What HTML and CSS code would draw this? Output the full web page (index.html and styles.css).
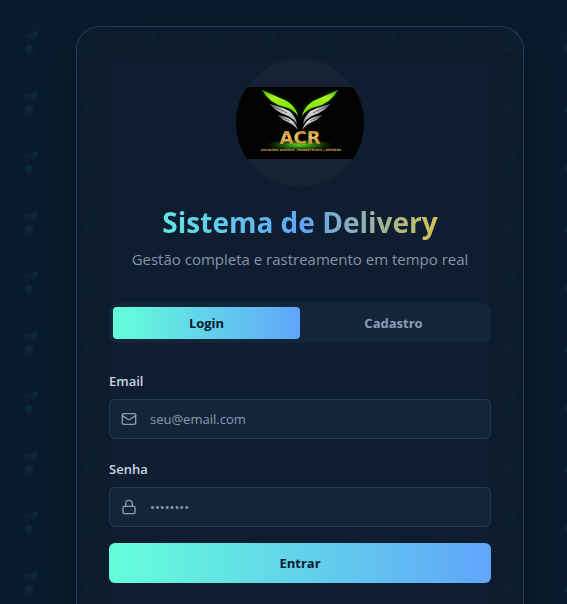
FILE: index.html
```html
<!DOCTYPE html>
<html lang="pt-BR">
<head>
  <meta charset="utf-8">
  <meta name="viewport" content="width=device-width, initial-scale=1">
  <title>Sistema de Delivery</title>
  <link rel="stylesheet" href="styles.css">
</head>
<body>
  <main class="page">
    <section class="card">
      <header class="brand">
        <svg class="logo" viewBox="0 0 128 128" role="img" aria-label="ACR">
          <defs>
            <clipPath id="disc"><circle cx="64" cy="64" r="64"/></clipPath>
            <linearGradient id="leaf" x1="0" y1="0" x2="1" y2="1">
              <stop offset="0" stop-color="#4fae16"/>
              <stop offset=".3" stop-color="#a4f51c"/>
              <stop offset="1" stop-color="#72da0b"/>
            </linearGradient>
            <linearGradient id="silver" x1="0" y1="0" x2="1" y2="1">
              <stop offset="0" stop-color="#747974"/>
              <stop offset=".5" stop-color="#d9dcd9"/>
              <stop offset="1" stop-color="#89908a"/>
            </linearGradient>
            <linearGradient id="gold" x1="0" y1="0" x2="0" y2="1">
              <stop offset="0" stop-color="#9c6420"/>
              <stop offset=".45" stop-color="#edc369"/>
              <stop offset="1" stop-color="#a8701c"/>
            </linearGradient>
            <radialGradient id="glow">
              <stop offset="0" stop-color="#b8ff4a"/>
              <stop offset=".25" stop-color="#48bd1b" stop-opacity=".85"/>
              <stop offset="1" stop-color="#1d7a0c" stop-opacity="0"/>
            </radialGradient>
            <filter id="soft" x="-30%" y="-30%" width="160%" height="160%"><feGaussianBlur stdDeviation="2"/></filter>
            <g id="wing">
              <path d="M26 31L44 39Q59 44 62 57Q57 50 49 48Q34 45 26 31Z" fill="#399c0b" opacity=".4" filter="url(#soft)"/>
              <path d="M26 31L44 39Q59 44 62 57Q57 50 49 48Q34 45 26 31Z" fill="url(#leaf)"/>
              <path d="M34 45L47 49Q59 53 61 65Q57 59 49 55.5Q39 52 34 45Z" fill="url(#silver)"/>
              <path d="M42 56L50 58Q59 61 62 71Q57 65 52 63Q46 61 42 56Z" fill="url(#silver)"/>
              <path d="M35 46Q44 51 51 54M43 57Q49 60 54 62" fill="none" stroke="#3b403c" stroke-width=".7"/>
            </g>
          </defs>
          <g clip-path="url(#disc)">
            <rect width="128" height="128" fill="#172335"/>
            <rect y="28" width="128" height="72" fill="#020301"/>
            <use href="#wing"/>
            <use href="#wing" transform="translate(128 0) scale(-1 1)"/>
            <ellipse cx="64" cy="86" rx="34" ry="6" fill="url(#glow)"/>
            <text class="logo-name" x="64" y="85" text-anchor="middle" fill="url(#gold)">ACR</text>
            <ellipse cx="64" cy="86" rx="14" ry="2" fill="url(#glow)"/>
            <text class="logo-tagline" x="65" y="92" text-anchor="middle">SOLUÇÕES DIGITAIS | MARKETPLACE | REPAROS</text>
          </g>
        </svg>
        <h1 class="title">Sistema de Delivery</h1>
        <p class="subtitle">Gestão completa e rastreamento em tempo real</p>
      </header>

      <div class="tabs" role="tablist">
        <button class="tab tab-active" type="button" role="tab" aria-selected="true">Login</button>
        <button class="tab" type="button" role="tab" aria-selected="false">Cadastro</button>
      </div>

      <form class="form">
        <div class="field">
          <label class="label" for="email">Email</label>
          <div class="control">
            <svg class="icon" viewBox="0 0 24 24" aria-hidden="true">
              <rect x="2" y="4" width="20" height="16" rx="2"/>
              <path d="m22 7-8.97 5.7a1.94 1.94 0 0 1-2.06 0L2 7"/>
            </svg>
            <input class="input" id="email" type="email" placeholder="seu@email.com">
          </div>
        </div>
        <div class="field">
          <label class="label" for="password">Senha</label>
          <div class="control">
            <svg class="icon" viewBox="0 0 24 24" aria-hidden="true">
              <rect x="3" y="11" width="18" height="11" rx="2"/>
              <path d="M7 11V7a5 5 0 0 1 10 0v4"/>
            </svg>
            <input class="input" id="password" type="password" placeholder="••••••••">
          </div>
        </div>
        <button class="submit" type="submit">Entrar</button>
      </form>
    </section>
  </main>
</body>
</html>
```
FILE: styles.css
```css
* {
  box-sizing: border-box;
}

html {
  background: #091b2c;
}

body {
  margin: 0;
  font-family: "Segoe UI", "Open Sans", "Noto Sans", sans-serif;
  color: #cbd5e1;
  overflow: hidden;
}

button,
input {
  font: inherit;
}

.page {
  min-height: 100vh;
  display: flex;
  justify-content: center;
  padding: 26px 43px 0 76px;
  background: url("data:image/svg+xml,%3Csvg xmlns='http://www.w3.org/2000/svg' width='60' height='60'%3E%3Cg fill='%230d2937'%3E%3Cpath d='M38 31Q33 31 30 36L33 40Q38 37 38 31ZM25 38Q26 34 31 35L29 36Q27 36 25 38Z'/%3E%3Ccircle cx='29' cy='49' r='4'/%3E%3C/g%3E%3C/svg%3E");
}

.card {
  position: relative;
  isolation: isolate;
  width: 100%;
  max-width: 448px;
  padding: 32px 32px 48px;
  border: 1px solid #233c5c;
  border-bottom: 0;
  border-radius: 24px 24px 0 0;
  background: rgba(15, 30, 48, 0.8);
  box-shadow: 0 24px 48px rgba(2, 12, 27, 0.2);
}

/* Solid centre that fades out towards the card edges. */
.card::before {
  content: "";
  position: absolute;
  z-index: -1;
  inset: 36px 36px 0;
  background: #0e1d2f;
  box-shadow: 0 0 20px 12px #0e1d2f;
}

.brand {
  display: flex;
  flex-direction: column;
  align-items: center;
  text-align: center;
}

.logo {
  width: 128px;
  height: 128px;
}

.logo-name {
  font: bold 18px "DejaVu Sans", sans-serif;
}

.logo-tagline {
  font: bold 3px "DejaVu Sans", sans-serif;
  fill: #d0a050;
}

.title {
  width: 100%;
  margin: 16px 0 6px;
  font-size: 28px;
  line-height: 38px;
  font-weight: 700;
  color: transparent;
  background: linear-gradient(90deg, #64ffda, #60a5fa, #facc15);
  -webkit-background-clip: text;
  background-clip: text;
}

.subtitle {
  margin: 0;
  font-size: 15px;
  line-height: 24px;
  color: #8794aa;
}

.tabs {
  display: grid;
  grid-template-columns: 1fr 1fr;
  margin-top: 32px;
  padding: 4px;
  border-radius: 8px;
  background: #132538;
}

.tab {
  height: 32px;
  padding: 0;
  border: 0;
  border-radius: 4px;
  background: none;
  font-size: 13px;
  font-weight: 700;
  color: #8d9db9;
}

.tab-active {
  color: #0a192f;
  background: linear-gradient(90deg, #64ffda, #60a5fa);
}

.form {
  display: flex;
  flex-direction: column;
  gap: 16px;
  margin-top: 24px;
}

.field {
  display: flex;
  flex-direction: column;
  gap: 8px;
}

.label {
  padding-top: 4px;
  font-size: 13px;
  line-height: 20px;
  font-weight: 600;
  color: #ccd6e6;
}

.control {
  display: flex;
  align-items: center;
  gap: 13px;
  height: 40px;
  padding: 0 11px;
  border: 1px solid #233b57;
  border-radius: 6px;
  background: #14253a;
}

.icon {
  flex: none;
  width: 16px;
  height: 16px;
  fill: none;
  stroke: #8d9bb4;
  stroke-width: 2;
  stroke-linecap: round;
  stroke-linejoin: round;
}

.input {
  flex: 1;
  min-width: 0;
  padding: 0;
  border: 0;
  outline: 0;
  background: none;
  font-size: 13px;
  color: #ccd6e6;
}

.input::placeholder {
  color: #8b99b2;
  opacity: 1;
}

.submit {
  height: 40px;
  border: 0;
  border-radius: 6px;
  font-size: 13px;
  font-weight: 700;
  color: #0a192f;
  background: linear-gradient(90deg, #64ffda, #60a5fa);
}
```
